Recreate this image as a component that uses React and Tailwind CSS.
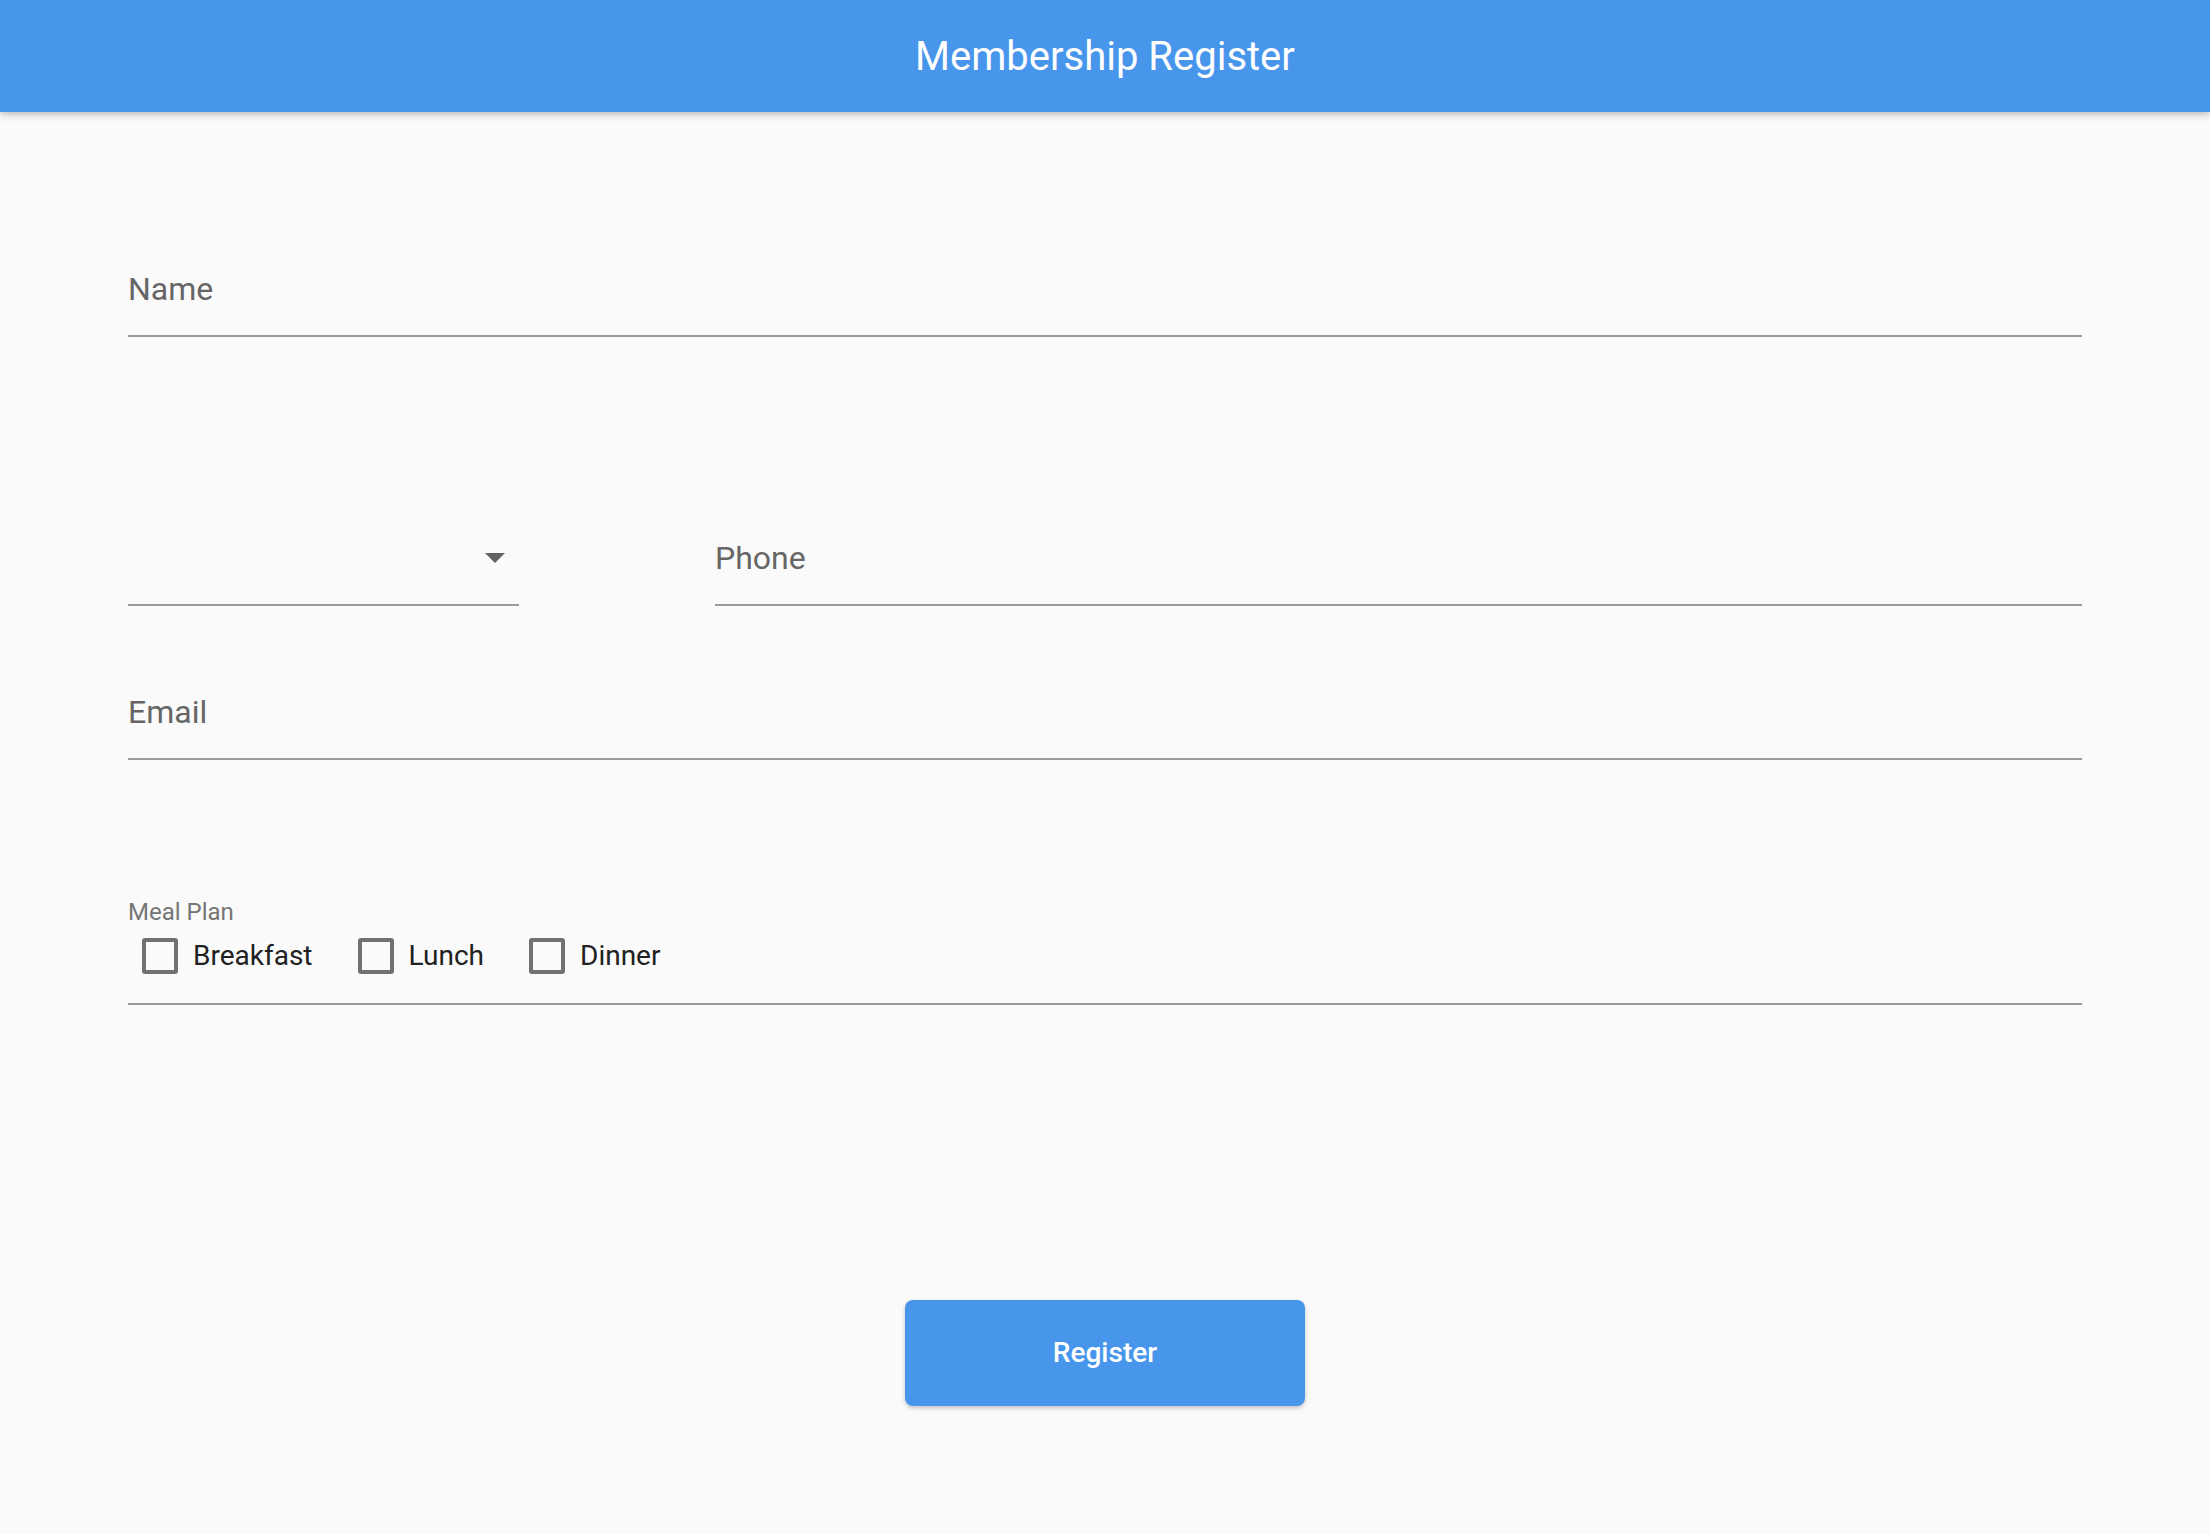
const meals = ['Breakfast', 'Lunch', 'Dinner']

function Field({ label, className = '' }) {
  return (
    <div className={`border-b-2 border-[#9a9a9a] pb-[30px] ${className}`}>
      <div className="h-[32px] text-[32px] leading-none text-[#666666]">{label}</div>
    </div>
  )
}

export default function App() {
  return (
    <div className="h-screen overflow-hidden bg-[#fafafa]" style={{ fontFamily: 'Roboto, "Noto Sans", sans-serif' }}>
      <header className="relative z-10 flex h-[112px] items-center justify-center bg-[#4896eb] pt-[2px] shadow-[0_2px_8px_rgba(0,0,0,0.28)]">
        <h1 className="m-0 text-[40px] font-normal leading-none text-white">Membership Register</h1>
      </header>

      <main className="px-[128px] pt-[161px]">
        <Field label="Name" />

        <div className="mt-[205px] flex gap-[196px]">
          <div className="w-[391px] border-b-2 border-[#9a9a9a] pb-[30px]">
            <div className="flex h-[32px] items-center justify-end pr-[14px]">
              <svg width="20" height="10" viewBox="0 0 20 10">
                <path d="M0 0 L20 0 L10 10 Z" fill="#616161" />
              </svg>
            </div>
          </div>
          <Field label="Phone" className="flex-1" />
        </div>

        <Field label="Email" className="mt-[90px]" />

        <div className="mt-[140px] border-b-2 border-[#9a9a9a] pb-[29px]">
          <div className="h-[24px] text-[24px] leading-none text-[#757575]">Meal Plan</div>
          <div className="mt-[14px] flex h-[36px] items-center pl-[14px]">
            {meals.map((meal) => (
              <label key={meal} className="mr-[45px] flex items-center">
                <span className="h-[36px] w-[36px] rounded-[3px] border-4 border-[#717171]" />
                <span className="ml-[15px] text-[28px] leading-[36px] text-[#212121]">{meal}</span>
              </label>
            ))}
          </div>
        </div>

        <div className="mt-[295px] flex justify-center">
          <button
            type="button"
            className="flex h-[106px] w-[400px] items-center justify-center rounded-[8px] bg-[#4896eb] text-[28px] font-medium leading-none text-white shadow-[0_2px_4px_rgba(0,0,0,0.22)]"
          >
            Register
          </button>
        </div>
      </main>
    </div>
  )
}
